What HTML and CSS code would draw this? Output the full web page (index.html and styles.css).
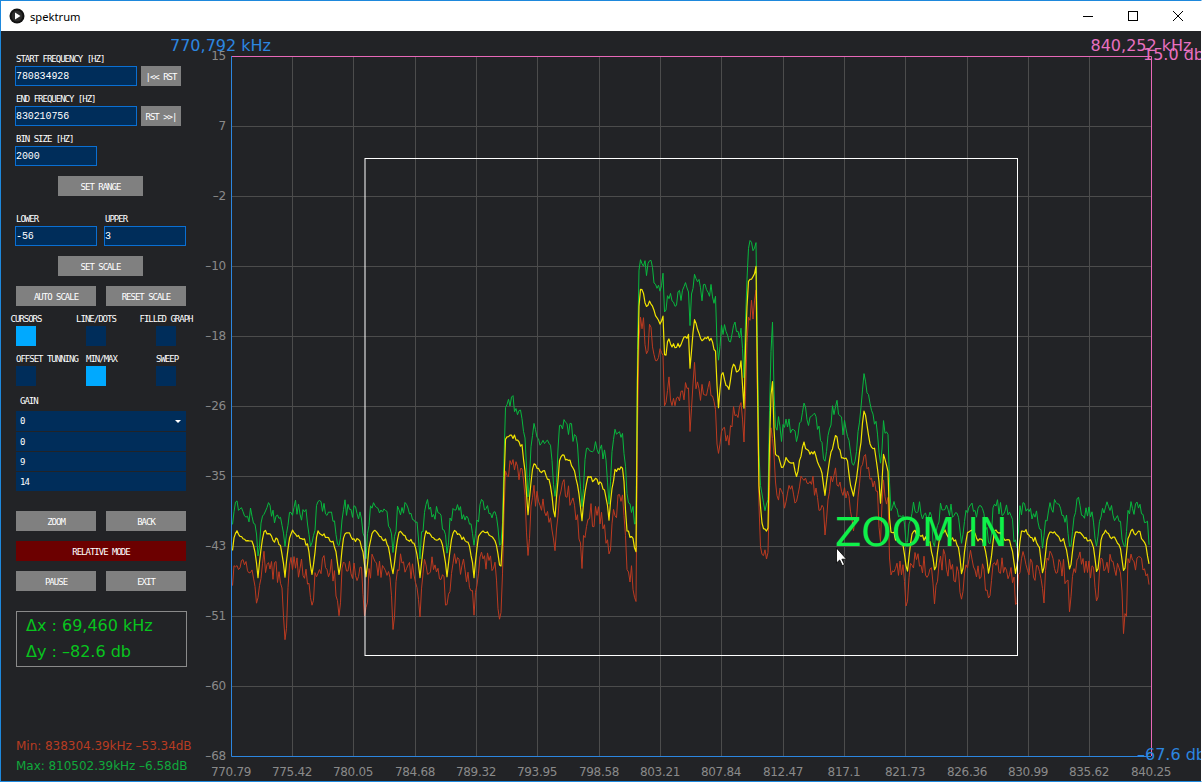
FILE: index.html
```html
<!DOCTYPE html>
<html lang="en">
<head>
    <meta charset="UTF-8">
    <title>spektrum</title>
    <link rel="stylesheet" href="styles.css">
</head>
<body>
<div class="window">
    <div class="titlebar">
        <svg class="app-icon" width="16" height="16" viewBox="0 0 16 16">
            <circle cx="8" cy="8" r="7.5" fill="#111"/>
            <circle cx="8" cy="8" r="5.5" fill="#2b2b2b"/>
            <path d="M6 4.5 L11.5 8 L6 11.5 Z" fill="#fff"/>
        </svg>
        <span class="app-name">spektrum</span>
        <div class="win-buttons">
            <div class="win-btn"><svg width="12" height="12" viewBox="0 0 12 12"><path d="M1 6.5 H11" stroke="#000"/></svg></div>
            <div class="win-btn"><svg width="12" height="12" viewBox="0 0 12 12"><rect x="1.5" y="1.5" width="9" height="9" fill="none" stroke="#000"/></svg></div>
            <div class="win-btn"><svg width="12" height="12" viewBox="0 0 12 12"><path d="M1 1 L11 11 M11 1 L1 11" stroke="#000"/></svg></div>
        </div>
    </div>
    <div class="content">
        <div class="sidebar">
            <div class="group">
                <div class="label">START FREQUENCY [HZ]</div>
                <div class="row">
                    <div class="input wide">780834928</div>
                    <div class="btn small">|&lt;&lt; RST</div>
                </div>
            </div>
            <div class="group">
                <div class="label">END FREQUENCY [HZ]</div>
                <div class="row">
                    <div class="input wide">830210756</div>
                    <div class="btn small">RST &gt;&gt;|</div>
                </div>
            </div>
            <div class="group">
                <div class="label">BIN SIZE [HZ]</div>
                <div class="input">2000</div>
            </div>
            <div class="btn center">SET RANGE</div>
            <div class="row scale-row">
                <div class="group">
                    <div class="label">LOWER</div>
                    <div class="input">-56</div>
                </div>
                <div class="group">
                    <div class="label">UPPER</div>
                    <div class="input">3</div>
                </div>
            </div>
            <div class="btn center">SET SCALE</div>
            <div class="btn-row">
                <div class="btn half">AUTO SCALE</div>
                <div class="btn half">RESET SCALE</div>
            </div>
            <div class="toggles mid">
                <div class="toggle"><div class="label">CURSORS</div><div class="box on"></div></div>
                <div class="toggle"><div class="label">LINE/DOTS</div><div class="box"></div></div>
                <div class="toggle"><div class="label">FILLED GRAPH</div><div class="box"></div></div>
            </div>
            <div class="toggles">
                <div class="toggle"><div class="label">OFFSET TUNNING</div><div class="box"></div></div>
                <div class="toggle"><div class="label">MIN/MAX</div><div class="box on"></div></div>
                <div class="toggle"><div class="label">SWEEP</div><div class="box"></div></div>
            </div>
            <div class="label gain-label">GAIN</div>
            <div class="gain">
                <div class="gain-item">0<span class="caret"></span></div>
                <div class="gain-item">0</div>
                <div class="gain-item">9</div>
                <div class="gain-item">14</div>
            </div>
            <div class="btn-row gap-big">
                <div class="btn half">ZOOM</div>
                <div class="btn half">BACK</div>
            </div>
            <div class="btn relative">RELATIVE MODE</div>
            <div class="btn-row">
                <div class="btn half">PAUSE</div>
                <div class="btn half">EXIT</div>
            </div>
            <div class="delta">
                <div>Δx : 69,460 kHz</div>
                <div>Δy : –82.6 db</div>
            </div>
            <div class="stats">
                <div class="stat-min">Min: 838304.39kHz –53.34dB</div>
                <div class="stat-max">Max: 810502.39kHz –6.58dB</div>
            </div>
        </div>
        <svg class="plot" width="1030" height="750" viewBox="171 31 1030 750">
            <path class="grid" d="M232 126.5H1151M232 196.5H1151M232 266.5H1151M232 336.5H1151M232 406.5H1151M232 476.5H1151M232 546.5H1151M232 616.5H1151M232 686.5H1151
                M292.5 56V756M353.5 56V756M415.5 56V756M476.5 56V756M537.5 56V756M599.5 56V756M660.5 56V756M721.5 56V756M783.5 56V756M844.5 56V756M905.5 56V756M967.5 56V756M1028.5 56V756M1089.5 56V756"/>
            <g id="traces"></g>
            <path class="axis-pink" d="M232 56.5H1151.5V756"/>
            <path class="axis-blue" d="M231.5 56V756.5H1151"/>
            <rect class="select" x="365" y="158.5" width="652.5" height="497"/>
            <g class="y-labels">
                <text x="226" y="60">15</text>
                <text x="226" y="130">7</text>
                <text x="226" y="200">–2</text>
                <text x="226" y="270">–10</text>
                <text x="226" y="340">–18</text>
                <text x="226" y="410">–26</text>
                <text x="226" y="480">–35</text>
                <text x="226" y="550">–43</text>
                <text x="226" y="620">–51</text>
                <text x="226" y="690">–60</text>
                <text x="226" y="760">–68</text>
            </g>
            <g class="x-labels">
                <text x="231" y="776">770.79</text>
                <text x="292" y="776">775.42</text>
                <text x="353" y="776">780.05</text>
                <text x="415" y="776">784.68</text>
                <text x="476" y="776">789.32</text>
                <text x="537" y="776">793.95</text>
                <text x="599" y="776">798.58</text>
                <text x="660" y="776">803.21</text>
                <text x="721" y="776">807.84</text>
                <text x="783" y="776">812.47</text>
                <text x="844" y="776">817.1</text>
                <text x="905" y="776">821.73</text>
                <text x="967" y="776">826.36</text>
                <text x="1028" y="776">830.99</text>
                <text x="1089" y="776">835.62</text>
                <text x="1151" y="776">840.25</text>
            </g>
            <text class="big blue" x="170" y="51">770,792 kHz</text>
            <text class="big pink" x="1090.5" y="51">840,252 kHz</text>
            <text class="big pink" x="1143" y="60">15.0 db</text>
            <text class="big blue" x="1137" y="760">–67.6 db</text>
            <text class="zoom-in" x="835" y="546">ZOOM IN</text>
            <path class="cursor" d="M836.5 548V563l3.2-3 2.6 5.6 2.2-1-2.6-5.4h4.6z"/>
        </svg>
    </div>
</div>
<script src="script.js"></script>
</body>
</html>
```

FILE: styles.css
```css
html, body {
    margin: 0;
    padding: 0;
}
body {
    width: 1202px;
    height: 782px;
    overflow: hidden;
    font-family: "DejaVu Sans", sans-serif;
}
.window {
    box-sizing: border-box;
    width: 1202px;
    height: 782px;
    border: 1px solid #1e88dc;
    border-right-color: #fff;
    display: flex;
    flex-direction: column;
    background: #222326;
}
.titlebar {
    height: 30px;
    background: #fff;
    display: flex;
    align-items: center;
    padding-left: 8px;
}
.app-icon {
    margin-right: 5px;
}
.app-name {
    font-family: "Noto Sans", sans-serif;
    font-size: 11.2px;
    color: #000;
}
.win-buttons {
    margin-left: auto;
    margin-right: 1px;
    display: flex;
}
.win-btn {
    width: 45px;
    height: 30px;
    display: flex;
    align-items: center;
    justify-content: center;
}
.content {
    flex: 1;
    display: flex;
    overflow: hidden;
}
.sidebar {
    box-sizing: border-box;
    flex: 0 0 231px;
    height: 750px;
    padding: 21px 0 5px 14px;
    display: flex;
    flex-direction: column;
    align-items: flex-start;
    color: #fff;
    font-family: "DejaVu Sans Mono", monospace;
    font-size: 9px;
    letter-spacing: -1px;
}
.group {
    display: flex;
    flex-direction: column;
    align-items: flex-start;
    margin-bottom: 6px;
}
.label {
    height: 12px;
    line-height: 14px;
    margin: 0 0 2px 1px;
    white-space: nowrap;
}
.row {
    display: flex;
    gap: 4px;
}
.input {
    box-sizing: border-box;
    width: 82px;
    height: 20px;
    line-height: 20px;
    background: #002d5a;
    border: 1px solid #0a6fd2;
    color: #fff;
    font-family: "Liberation Mono", monospace;
    font-size: 10px;
    letter-spacing: -0.1px;
}
.input.wide {
    width: 122px;
}
.btn {
    height: 20px;
    line-height: 22px;
    background: #808080;
    text-align: center;
    white-space: nowrap;
}
.btn.small {
    width: 40px;
}
.btn.center {
    width: 85px;
    margin: 4px 0 0 43px;
}
.scale-row {
    gap: 7px;
    margin-top: 16px;
    height: 34px;
}
.scale-row .group {
    margin: 0;
}
.btn-row {
    display: flex;
    gap: 10px;
    margin: 10px 0 0 1px;
}
.btn.half {
    width: 80px;
}
.scale-row + .btn.center {
    margin-top: 10px;
}
.toggles {
    display: flex;
    gap: 50px;
    margin: 6px 0 0 1px;
}
.toggle {
    width: 20px;
    display: flex;
    flex-direction: column;
    align-items: flex-start;
}
.toggles.mid .toggle {
    align-items: center;
}
.toggle .label {
    margin-left: 0;
}
.box {
    width: 20px;
    height: 20px;
    background: #002d5a;
}
.box.on {
    background: #00a9ff;
}
.gain-label {
    margin: 8px 0 5px 5px;
}
.gain {
    width: 170px;
    margin-left: 1px;
}
.gain-item {
    box-sizing: border-box;
    height: 20px;
    line-height: 22px;
    padding-left: 4px;
    background: #002d5a;
    border-top: 1px solid #222326;
    display: flex;
    justify-content: space-between;
    align-items: center;
}
.gain-item:first-child {
    border-top: 0;
}
.caret {
    width: 0;
    height: 0;
    margin-right: 5px;
    border-left: 3px solid transparent;
    border-right: 3px solid transparent;
    border-top: 3px solid #fff;
}
.gap-big {
    margin-top: 20px;
}
.btn.relative {
    width: 170px;
    margin: 10px 0 0 1px;
    background: #6c0000;
}
.delta {
    box-sizing: border-box;
    width: 171px;
    height: 56px;
    margin: 20px 0 0 1px;
    padding: 1px 0 0 9px;
    border: 1px solid #8a8a8a;
    color: #08c41e;
    font-family: "DejaVu Sans", sans-serif;
    font-size: 16px;
    letter-spacing: 0;
    line-height: 26px;
    white-space: nowrap;
}
.stats {
    margin: auto 0 0 1px;
    font-family: "DejaVu Sans", sans-serif;
    font-size: 12px;
    letter-spacing: -0.03px;
    line-height: 20px;
    white-space: nowrap;
}
.stat-min {
    color: #b83c22;
}
.stat-max {
    color: #10a83c;
}
.plot {
    display: block;
    flex: none;
    margin-left: -61px;
    pointer-events: none;
}
.grid {
    stroke: #4c4c4c;
    fill: none;
}
.axis-pink {
    stroke: #e868b8;
    fill: none;
}
.axis-blue {
    stroke: #2c86e0;
    fill: none;
}
.select {
    stroke: #fff;
    fill: none;
}
.y-labels text {
    fill: #8a8a8a;
    font-size: 12px;
    letter-spacing: -0.2px;
    text-anchor: end;
}
.x-labels text {
    fill: #8a8a8a;
    font-size: 12px;
    letter-spacing: -0.3px;
    text-anchor: middle;
}
.big {
    font-size: 16px;
}
.blue {
    fill: #2c86e0;
}
.pink {
    fill: #e870c0;
}
.zoom-in {
    fill: #0ff04a;
    font-size: 38.5px;
}
.cursor {
    fill: #fff;
    stroke: #000;
    stroke-width: 0.8;
}
.trace {
    fill: none;
    stroke-width: 1;
    stroke-linejoin: round;
}
.trace.red {
    stroke: #bd3a20;
}
.trace.green {
    stroke: #08b83e;
}
.trace.yellow {
    stroke: #f2e400;
    stroke-width: 1.2;
}
```

FILE: script.js
```js
// spectrum traces: yellow is the mean, green and red sit at an offset with more noise
let seed = 20220;
function rnd() {
    seed = (seed * 1664525 + 1013904223) % 4294967296;
    return seed / 4294967296 - 0.5;
}

function add_dips(keys, dips, base) {
    for (const c of dips) {
        keys.push([c - 12, base + 4], [c - 7, base + 6], [c - 4, base + 12], [c - 2, base + 26]);
        keys.push([c, base + 41], [c + 2, base + 24], [c + 4, base + 6], [c + 6, base - 3], [c + 10, base - 2]);
    }
}

const yellow_keys = [[232, 557], [235, 531], [240, 534]];
add_dips(yellow_keys, [258, 285, 312, 339, 366, 393, 420, 447, 474], 535);
yellow_keys.push([492, 535], [497, 545], [500, 568], [502, 560], [505, 440]);
yellow_keys.push(
    [507, 438], [514, 436], [522, 447], [525, 470], [528, 515], [530, 490], [533, 463], [540, 470], [545, 473],
    [550, 482], [553, 505], [555, 517], [557, 490], [560, 455], [565, 458], [570, 462], [575, 470], [579, 495],
    [582, 522], [584, 500], [588, 477], [594, 480], [600, 483], [605, 490], [609, 518], [612, 490], [615, 470],
    [623, 468], [625, 500], [627, 530], [630, 537], [633, 540], [635, 553], [636, 553], [638, 320],
    [640, 292], [643, 291], [646, 310], [650, 300], [655, 315], [660, 323], [663, 315], [665, 367], [668, 338],
    [672, 346], [680, 345], [685, 337], [689, 335], [690, 370], [694, 317], [698, 330], [702, 343], [708, 337],
    [712, 342], [716, 355], [718, 412], [722, 370], [726, 383], [729, 390], [733, 362], [738, 373], [741, 362],
    [744, 410], [746, 330], [748, 280], [752, 278], [754, 274], [756, 267], [757, 300], [758, 473], [761, 513],
    [763, 530], [767, 532], [768, 530], [770, 420], [772, 368], [773, 400], [775, 453],
    [778, 456], [782, 468], [787, 458], [793, 463], [797, 477], [803, 443], [810, 452], [815, 453], [818, 463],
    [822, 475], [825, 493], [827, 480], [830, 457], [836, 433], [839, 450], [843, 460], [847, 460], [850, 480],
    [853, 498], [856, 480], [860, 450], [864, 410], [867, 425], [870, 443], [875, 450], [878, 470], [881, 507],
    [883, 452], [888, 470], [890, 533], [895, 533]
);
add_dips(yellow_keys, [907, 935, 962, 989, 1016, 1043, 1070, 1097, 1124], 534);
yellow_keys.push([1140, 534], [1146, 545], [1149, 565]);

const green_gap = [[232, 25], [503, 25], [505, 33], [637, 33], [660, 38], [680, 50], [715, 50], [735, 40], [750, 30],
    [757, 30], [762, 22], [768, 22], [772, 58], [775, 33], [889, 33], [892, 26], [1150, 26]];
const red_gap = [[232, 30], [505, 30], [636, 38], [637, 33], [660, 35], [670, 50], [695, 55], [712, 50], [730, 52],
    [745, 40], [757, 28], [768, 30], [772, 46], [776, 33], [889, 36], [892, 30], [1150, 28]];
// the few places where a trace leaves its usual distance from the yellow one
const red_drops = { 285: 24, 366: 10, 393: 12, 500: 22, 1125: 26, 636: 8 };
const green_drops = { 528: 15, 555: 15, 582: 15, 609: 15 };

function lookup(keys, x) {
    for (let i = 1; i < keys.length; i++) {
        if (x <= keys[i][0]) {
            const a = keys[i - 1], b = keys[i];
            return a[1] + (b[1] - a[1]) * (x - a[0]) / (b[0] - a[0]);
        }
    }
    return keys[keys.length - 1][1];
}

function drop_at(drops, x) {
    for (const k in drops) {
        if (Math.abs(x - k) < 2.5) return drops[k];
    }
    return 0;
}

function add_trace(name, points) {
    const line = document.createElementNS("http://www.w3.org/2000/svg", "polyline");
    line.setAttribute("class", "trace " + name);
    line.setAttribute("points", points.join(" "));
    document.getElementById("traces").appendChild(line);
}

yellow_keys.sort((a, b) => a[0] - b[0]);
const red = [], green = [], yellow = [];
for (let x = 232.5; x < 1150; x += 1.5) {
    const y = lookup(yellow_keys, x);
    yellow.push(x + "," + (y + rnd() * 5).toFixed(1));
    green.push(x + "," + (y - lookup(green_gap, x) + drop_at(green_drops, x) + rnd() * 17).toFixed(1));
    red.push(x + "," + (y + lookup(red_gap, x) + drop_at(red_drops, x) + rnd() * 24).toFixed(1));
}
add_trace("red", red);
add_trace("green", green);
add_trace("yellow", yellow);
```
